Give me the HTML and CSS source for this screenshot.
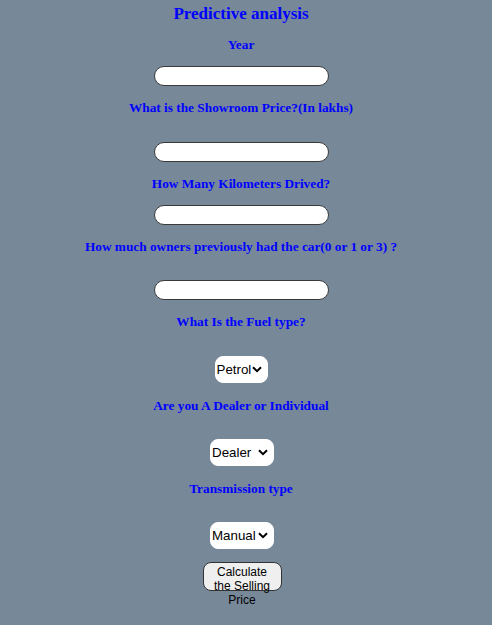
FILE: index.html
```html
<!DOCTYPE html>
<html>
<head>
<meta charset="utf-8">
<link rel="stylesheet" href="styles.css">
</head>
<body>
<form class="form">
  <h1 class="title">Predictive analysis</h1>
  <label class="label l-year">Year</label>
  <input class="field f-1" type="text">
  <label class="label l-tight">What is the Showroom Price?(In lakhs)</label>
  <input class="field f-wide" type="text">
  <label class="label l-tight">How Many Kilometers Drived?</label>
  <input class="field f-1" type="text">
  <label class="label l-tight">How much owners previously had the car(0 or 1 or 3) ?</label>
  <input class="field f-wide f-owners" type="text">
  <label class="label l-tight">What Is the Fuel type?</label>
  <select class="pick pick-fuel"><option>Petrol</option><option>Diesel</option><option>CNG</option></select>
  <label class="label l-loose">Are you A Dealer or Individual</label>
  <select class="pick pick-wide"><option>Dealer</option><option>Individual</option></select>
  <label class="label l-loose">Transmission type</label>
  <select class="pick pick-wide"><option>Manual Car</option><option>Automatic Car</option></select>
  <button class="calc" type="button">Calculate the Selling Price</button>
</form>
</body>
</html>
```
FILE: styles.css
```css
html, body {
  margin: 0;
  padding: 0;
  background: #778899;
}
body {
  width: 492px;
  height: 625px;
  overflow: hidden;
}
.form {
  display: flex;
  flex-direction: column;
  align-items: center;
  margin: 0;
  padding: 0 10px 0 0;
}
.title {
  margin: 4px 0 0;
  font-family: "Liberation Serif", "Times New Roman", serif;
  font-weight: bold;
  font-size: 17px;
  line-height: 20px;
  color: #0000ff;
}
.label {
  display: block;
  font-family: "Liberation Serif", "Times New Roman", serif;
  font-weight: bold;
  font-size: 13.3px;
  line-height: 15px;
  color: #0000ff;
  text-align: center;
}
.l-year { margin-top: 13px; }
.l-tight { margin-top: 14px; }
.l-loose { margin-top: 15px; }
.field {
  box-sizing: border-box;
  width: 175px;
  height: 20px;
  margin: 14px 0 0;
  padding: 1px 8px;
  border: 1px solid #3a3a3a;
  border-radius: 10px;
  background: #ffffff;
  font-family: Arial, "Liberation Sans", sans-serif;
  font-size: 13px;
}
.f-wide { margin-top: 27px; }
.f-owners { margin-top: 26px; }
.pick {
  -webkit-appearance: none;
  appearance: none;
  box-sizing: border-box;
  height: 27px;
  margin-top: 27px;
  padding: 0 15px 0 1px;
  border: 1px solid #ffffff;
  border-radius: 8px;
  background-color: #ffffff;
  background-image: url("data:image/svg+xml;utf8,<svg xmlns='http://www.w3.org/2000/svg' width='10' height='7' viewBox='0 0 10 7'><path d='M1 1.2 L5 5.2 L9 1.2' fill='none' stroke='black' stroke-width='2'/></svg>");
  background-repeat: no-repeat;
  background-position: right 5px center;
  background-size: 10px 7px;
  color: #000;
  font-family: Arial, "Liberation Sans", sans-serif;
  font-size: 13.33px;
}
.pick-fuel { width: 53px; }
.pick-wide { width: 64px; margin-top: 26px; margin-left: 2px; }
.calc {
  box-sizing: border-box;
  width: 79px;
  height: 29px;
  margin-top: 13px;
  margin-left: 2px;
  padding: 2px 6px 1px;
  border: 1px solid #333;
  border-radius: 8px;
  background: #efefef;
  color: #000;
  font-family: Arial, "Liberation Sans", sans-serif;
  font-size: 12px;
  line-height: 14px;
}
```
